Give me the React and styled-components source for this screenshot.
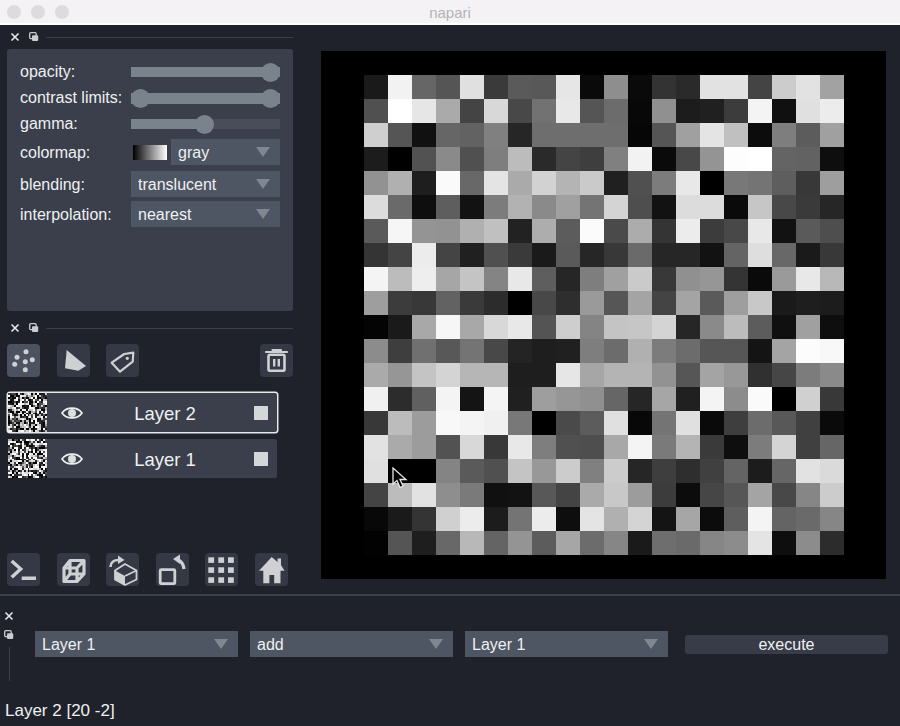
import React from "react";
import styled, { createGlobalStyle } from "styled-components";

const GlobalStyle = createGlobalStyle`
html, body {
    margin: 0;
    padding: 0;
    background: #1f222a;
}
body {
    font-family: "Liberation Sans", Arial, sans-serif;
    color: #eef0f2;
}
`

const PIXELS = [
    "1a f2 66 55 e0 3a 5a 58 e6 0a 8e 0a 33 2a e2 e2 44 cc e2 a2",
    "50 ff e6 aa 44 d8 48 72 e8 55 6c 08 90 1c 20 3c f4 10 e0 ec",
    "cf 55 11 66 62 80 26 6e 6e 6e 6e 06 55 a0 e4 c0 0c 7e 5c a0",
    "1c 00 52 8a 50 7e bc 2a 44 3e 80 f2 0a 48 94 fd ff 64 62 0e",
    "92 b0 1e fa 68 e4 aa d2 b4 ca 20 50 7c e8 00 78 74 5e 38 9e",
    "dc 6a 0e 5e 12 7c b2 8a a0 74 d4 4e 12 dc dc 0a c6 48 3a 26",
    "5a f6 94 92 b0 c0 22 ad 5c fb 4a ac 34 ec 3c 48 e8 12 5a 4e",
    "34 44 ec 44 20 50 3a 1a 5a 26 38 6a 26 26 12 64 de 68 1a 38",
    "f4 bc ee a6 c4 84 e8 5e 26 7e a0 ca 38 90 96 34 0a 9a e8 b8",
    "9e 3c 38 62 3a 2c 00 48 2e 9a 56 a4 44 a4 5a 9e c8 1a 1e 1c",
    "04 1a a8 f6 a8 d8 e8 54 ce 84 c4 c6 d4 26 8a bc 5c 10 a0 0e",
    "8c 3e 70 58 74 48 24 1e 20 7e 6c b0 7c 6c 56 56 14 a4 fc f8",
    "aa 96 c4 d4 b6 b6 1e 1e e6 a6 b4 b4 92 56 a4 98 30 46 7c 8a",
    "f0 2c 60 f4 14 f4 20 9e 96 90 66 26 a6 20 f4 8c fa 00 d0 38",
    "38 bc 9c f8 f4 f0 78 00 4a 5c e0 08 74 e0 0a 3e 6c 58 40 0a",
    "e2 aa 9c 52 d8 38 e8 7e 50 4e a8 f4 7a b4 3a 0e 7c d4 40 66",
    "e0 00 00 84 5a 50 c4 98 cc 80 cc 26 3e 2e 40 64 1c 66 e2 da",
    "44 bc e2 8e 7a 10 12 58 44 aa c8 9c 3c 0c 46 56 a4 48 86 cc",
    "08 1a 34 d0 ec 1c 74 ec 0e e4 b0 d4 14 a6 0c 5e f4 64 6a 86",
    "02 55 1e 68 b8 64 94 5c a6 6c 86 1a 6e 6a 86 8c e4 0e 8c 2c",
].map((row) => row.split(" "))

// deterministic noise for the small layer thumbnails
const noise = (seed) => {
    let s = seed
    const rows = []
    for (let y = 0; y < 20; y++) {
        const row = []
        for (let x = 0; x < 20; x++) {
            s = (s * 1103515245 + 12345) % 2147483648
            const v = Math.floor(s / 65536) % 256
            row.push((v > 128 ? Math.min(255, v + 35) : Math.max(0, v - 35)).toString(16).padStart(2, "0"))
        }
        rows.push(row)
    }
    return rows
}

const Window = styled.div`
width: 900px;
height: 726px;
display: flex;
flex-direction: column;
overflow: hidden;
background: #1f222a;
`
const TitleBar = styled.div`
flex: none;
height: 23px;
display: flex;
align-items: center;
position: relative;
padding-left: 7px;
gap: 10px;
background: #f4f2f4;
border-bottom: 2px solid #ffffff;
`
const TrafficLight = styled.span`
width: 14px;
height: 14px;
border-radius: 50%;
background: #dcdcdc;
`
const WindowTitle = styled.div`
position: absolute;
left: 0;
right: 0;
top: 4px;
text-align: center;
font-size: 15px;
color: #b4b4b4;
`
const Main = styled.div`
flex: none;
height: 569px;
display: flex;
`
const LeftColumn = styled.div`
flex: none;
width: 286px;
margin-left: 7px;
display: flex;
flex-direction: column;
`
const Handle = styled.div`
flex: none;
height: 24px;
margin-top: ${(p) => p.$top || 0}px;
display: flex;
align-items: center;
padding-left: 3px;
`
const HandleLine = styled.div`
flex: 1;
height: 1px;
margin-left: 7px;
background: #3a3f4a;
`
const Panel = styled.div`
flex: none;
height: 253px;
padding-top: 9px;
padding-left: 13px;
border-radius: 3px;
background: #3a3f4b;
`
const ControlRow = styled.div`
display: flex;
align-items: center;
height: 26px;
margin-top: ${(p) => p.$top || 0}px;
`
const Label = styled.div`
flex: none;
width: 111px;
padding-top: 1px;
font-size: 16px;
white-space: nowrap;
`
const Track = styled.div`
width: 149px;
height: ${(p) => p.$height || 10}px;
margin-top: 2px;
position: relative;
background: #474d59;
`
const Fill = styled.div`
height: 100%;
background: #7a838b;
`
const Knob = styled.div`
position: absolute;
top: 50%;
width: 19px;
height: 19px;
margin-top: -9.5px;
border-radius: 50%;
background: #7a838b;
`
const Combo = styled.div`
width: ${(p) => (p.$width ? `${p.$width}px` : "auto")};
height: 26px;
box-sizing: border-box;
display: flex;
align-items: center;
justify-content: space-between;
padding: 1px 10px 0 7px;
font-size: 16px;
background: #4f5663;
`
const Arrow = styled.span`
width: 0;
height: 0;
margin-top: -1px;
border-left: 7.5px solid transparent;
border-right: 7.5px solid transparent;
border-top: 10px solid #80878f;
`
const Swatch = styled.div`
flex: none;
width: 34px;
height: 15px;
margin: 0 4px 0 2px;
background: linear-gradient(to right, #000, #fff);
`
const ButtonRow = styled.div`
flex: none;
display: flex;
gap: ${(p) => p.$gap || 16.5}px;
margin-top: ${(p) => (p.$bottom ? "auto" : "4px")};
margin-bottom: ${(p) => (p.$bottom ? "8px" : "0")};
`
const IconButton = styled.div`
flex: none;
width: 33px;
height: 33px;
margin-left: ${(p) => (p.$push ? "auto" : "0")};
border-radius: 4px;
background: ${(p) => (p.$active ? "#4c525f" : "#353945")};
svg {
    display: block;
}
`
const LayerList = styled.div`
display: flex;
flex-direction: column;
gap: 7px;
margin-top: 16px;
`
const LayerRow = styled.div`
width: 269px;
height: 39px;
margin-left: 1px;
box-sizing: border-box;
display: flex;
align-items: center;
position: relative;
background: #3a3f4b;
border-radius: 2px;
box-shadow: ${(p) => (p.$selected ? "0 0 0 1.5px #e6e8ea" : "none")};
`
const Thumb = styled.svg`
flex: none;
display: block;
filter: blur(0.4px);
`
const LayerName = styled.div`
flex: 1;
text-align: center;
font-size: 18.5px;
margin-right: 8px;
padding-top: 3px;
`
const VisibleBox = styled.div`
flex: none;
width: 14px;
height: 14px;
margin-right: 9px;
background: #d5d6d8;
`
const CanvasWrap = styled.div`
flex: none;
width: 565px;
height: 528px;
margin: 26px 0 0 28px;
box-sizing: border-box;
padding: 24px 42px 24px 43px;
position: relative;
background: #000000;
`
const Image = styled.div`
width: 480px;
height: 480px;
display: grid;
grid-template-columns: repeat(20, 24px);
grid-auto-rows: 24px;
`
const Cursor = styled.svg`
position: absolute;
left: 71px;
top: 416px;
`
const Divider = styled.div`
flex: none;
height: 2px;
background: #3a404b;
`
const BottomDock = styled.div`
flex: none;
height: 100px;
display: flex;
`
const SideHandle = styled.div`
flex: none;
width: 18px;
display: flex;
flex-direction: column;
align-items: center;
padding-top: 15px;
gap: 9px;
`
const SideLine = styled.div`
width: 1px;
height: 34px;
margin-top: -2px;
background: #3a3f4a;
`
const Operators = styled.div`
margin: 35px 0 0 17px;
display: grid;
grid-template-columns: repeat(3, 203px) 208px;
column-gap: 12px;
align-items: center;
height: 26px;
`
const ExecuteButton = styled.div`
margin-left: 5px;
height: 19px;
border-radius: 3px;
font-size: 16px;
line-height: 20px;
text-align: center;
background: #383c48;
`
const StatusBar = styled.div`
padding-left: 5px;
margin-top: 5px;
font-size: 17px;
line-height: 20px;
`

const CloseIcon = () => (
    <svg width="10" height="10" viewBox="0 0 10 10" style={{ flex: "none" }}>
        <path d="M1.5 1.5 L8.5 8.5 M8.5 1.5 L1.5 8.5" stroke="#e6e8ea" strokeWidth="1.6" />
    </svg>
)
const FloatIcon = ({ inset }) => (
    <svg width="10" height="10" viewBox="0 0 10 10" style={{ flex: "none", marginLeft: inset || 0 }}>
        <rect x="0.7" y="0.7" width="6.5" height="6" rx="1.2" fill="none" stroke="#c9ccd0" strokeWidth="1.3" />
        <rect x="3" y="3.2" width="6.2" height="5.8" rx="1" fill="#c9ccd0" />
    </svg>
)

const ICON = "#cfd0d3"

const Glyph = ({ children }) => (
    <svg width="33" height="33" viewBox="0 0 33 33">{children}</svg>
)

const PointsIcon = () => (
    <Glyph>
        {[[10, 13.3], [19, 7.7], [25.3, 15.7], [18.3, 17.7], [7.7, 20.3], [18.3, 25.7]].map(([x, y]) => (
            <circle key={x + "-" + y} cx={x} cy={y} r="2.5" fill={ICON} />
        ))}
    </Glyph>
)
const ShapeIcon = () => (
    <Glyph>
        <path d="M9.7 6 L29 22 L21.3 26.7 L8 24.3 Z" fill={ICON} />
    </Glyph>
)
const LabelIcon = () => (
    <Glyph>
        <path d="M5.7 18.7 L18.3 10 L27.3 8.7 L26.7 17.7 L14 27.7 Z" fill="none" stroke={ICON} strokeWidth="2.2" strokeLinejoin="round" />
        <circle cx="21.3" cy="14.3" r="1.6" fill={ICON} />
    </Glyph>
)
const TrashIcon = () => (
    <Glyph>
        <path d="M6 8 H27 M12.5 6 H21" stroke={ICON} strokeWidth="2.2" strokeLinecap="round" fill="none" />
        <rect x="8.5" y="10.7" width="16" height="16" rx="1.5" fill="none" stroke={ICON} strokeWidth="2.6" />
        <path d="M14.2 15 V22.5 M18.8 15 V22.5" stroke={ICON} strokeWidth="2.4" fill="none" />
    </Glyph>
)
const ConsoleIcon = () => (
    <Glyph>
        <path d="M4.7 8 L13.7 16 L4.7 24.3 M14.7 25.3 H29" fill="none" stroke={ICON} strokeWidth="3.4" strokeLinejoin="miter" />
    </Glyph>
)
const WireCubeIcon = () => (
    <Glyph>
        <path d="M13 7.5 H27 V21 L20 28.5 H7 V15 Z M7 15 H20 V28.5 M20 15 L27 7.5 M13 7.5 V21 H27 M7 28.5 L13 21" fill="none" stroke={ICON} strokeWidth="3.2" strokeLinejoin="round" />
    </Glyph>
)
const RotateCubeIcon = () => (
    <Glyph>
        <path d="M19 11 L30.5 17.5 V26.5 L19 32 L9 26.5 V17.5 Z" fill="none" stroke={ICON} strokeWidth="1.8" strokeLinejoin="round" />
        <path d="M9 17.5 L19 23 V32 L9 26.5 Z" fill={ICON} />
        <path d="M19 23 L30.5 17.5" stroke={ICON} strokeWidth="1.8" />
        <path d="M4.5 14 C4.5 9.5 8 7 12.5 7" fill="none" stroke={ICON} strokeWidth="2.6" />
        <path d="M12 2.5 L18.5 7 L12 11 Z" fill={ICON} />
    </Glyph>
)
const RotateSquareIcon = () => (
    <Glyph>
        <rect x="4.2" y="16.7" width="14.6" height="14" rx="1" fill="none" stroke={ICON} strokeWidth="2.8" />
        <path d="M28 16 C27.5 11 25 8 21.5 6.5" fill="none" stroke={ICON} strokeWidth="3.2" />
        <path d="M17 6 L24 1.5 L24 11 Z" fill={ICON} />
    </Glyph>
)
const GridIcon = () => (
    <Glyph>
        {[3.3, 13.3, 23].map((x) => [4.3, 14.3, 24.3].map((y) => (
            <rect key={x + "-" + y} x={x} y={y} width="5.8" height="5.6" fill={ICON} />
        )))}
    </Glyph>
)
const HomeIcon = () => (
    <Glyph>
        <path d="M16.7 4 L22.5 9 V5.5 H26 V12 L29.5 17.7 H25.5 V30.3 H19.2 V22 H14.4 V30.3 H8.3 V17.7 H4 Z" fill={ICON} />
    </Glyph>
)
const EyeIcon = () => (
    <svg width="24" height="16" viewBox="0 0 24 16" style={{ flex: "none", marginLeft: 13 }}>
        <path d="M2 8 C6.5 1.5 17.5 1.5 22 8 C17.5 14.5 6.5 14.5 2 8 Z" fill="none" stroke="#eceef0" strokeWidth="1.7" />
        <circle cx="12" cy="8" r="4" fill="#dcdee0" />
    </svg>
)

const Thumbnail = ({ data }) => (
    <Thumb width="39" height="39" viewBox="0 0 20 20" shapeRendering="crispEdges">
        {data.map((row, y) => row.map((v, x) => (
            <rect key={x + "-" + y} x={x} y={y} width="1" height="1" fill={`#${v}${v}${v}`} />
        )))}
    </Thumb>
)

const Slider = ({ fill, knobs, height }) => (
    <Track $height={height}>
        <Fill style={{ width: `${fill}%` }} />
        {knobs.map((left) => <Knob key={left} style={{ left }} />)}
    </Track>
)

const Select = ({ value, width }) => (
    <Combo $width={width}>
        {value}
        <Arrow />
    </Combo>
)

const Layer = ({ name, data, selected }) => (
    <LayerRow $selected={selected}>
        <Thumbnail data={data} />
        <EyeIcon />
        <LayerName>{name}</LayerName>
        <VisibleBox />
    </LayerRow>
)

const App = () => {
    return <>
    <GlobalStyle />
    <Window>
        <TitleBar>
            <TrafficLight />
            <TrafficLight />
            <TrafficLight />
            <WindowTitle>napari</WindowTitle>
        </TitleBar>
        <Main>
            <LeftColumn>
                <Handle><CloseIcon /><FloatIcon inset={9} /><HandleLine /></Handle>
                <Panel>
                    <ControlRow>
                        <Label>opacity:</Label>
                        <Slider fill={100} knobs={[130]} />
                    </ControlRow>
                    <ControlRow>
                        <Label>contrast limits:</Label>
                        <Slider fill={100} knobs={[0, 130]} height={11} />
                    </ControlRow>
                    <ControlRow>
                        <Label>gamma:</Label>
                        <Slider fill={49} knobs={[64]} />
                    </ControlRow>
                    <ControlRow $top={3}>
                        <Label>colormap:</Label>
                        <Swatch />
                        <Select value="gray" width={109} />
                    </ControlRow>
                    <ControlRow $top={6}>
                        <Label>blending:</Label>
                        <Select value="translucent" width={149} />
                    </ControlRow>
                    <ControlRow $top={4}>
                        <Label>interpolation:</Label>
                        <Select value="nearest" width={149} />
                    </ControlRow>
                </Panel>
                <Handle $top={5}><CloseIcon /><FloatIcon inset={9} /><HandleLine /></Handle>
                <ButtonRow>
                    <IconButton $active><PointsIcon /></IconButton>
                    <IconButton><ShapeIcon /></IconButton>
                    <IconButton><LabelIcon /></IconButton>
                    <IconButton $push><TrashIcon /></IconButton>
                </ButtonRow>
                <LayerList>
                    <Layer name="Layer 2" data={noise(7)} selected />
                    <Layer name="Layer 1" data={noise(42)} />
                </LayerList>
                <ButtonRow $bottom>
                    <IconButton><ConsoleIcon /></IconButton>
                    <IconButton><WireCubeIcon /></IconButton>
                    <IconButton><RotateCubeIcon /></IconButton>
                    <IconButton><RotateSquareIcon /></IconButton>
                    <IconButton><GridIcon /></IconButton>
                    <IconButton><HomeIcon /></IconButton>
                </ButtonRow>
            </LeftColumn>
            <CanvasWrap>
                <Image>
                    {PIXELS.flat().map((v, i) => (
                        <div key={i} style={{ background: `#${v}${v}${v}` }} />
                    ))}
                </Image>
                <Cursor width="16" height="22" viewBox="0 0 16 22">
                    <path d="M1 1 V17 L5 13.5 L8 20.5 L11 19 L8 12.5 L14 12.5 Z" fill="#000" stroke="#e8e8e8" strokeWidth="1.3" />
                </Cursor>
            </CanvasWrap>
        </Main>
        <Divider />
        <BottomDock>
            <SideHandle>
                <CloseIcon />
                <FloatIcon />
                <SideLine />
            </SideHandle>
            <Operators>
                <Select value="Layer 1" />
                <Select value="add" />
                <Select value="Layer 1" />
                <ExecuteButton>execute</ExecuteButton>
            </Operators>
        </BottomDock>
        <StatusBar>Layer 2 [20 -2]</StatusBar>
    </Window>
    </>
}

export default App;
